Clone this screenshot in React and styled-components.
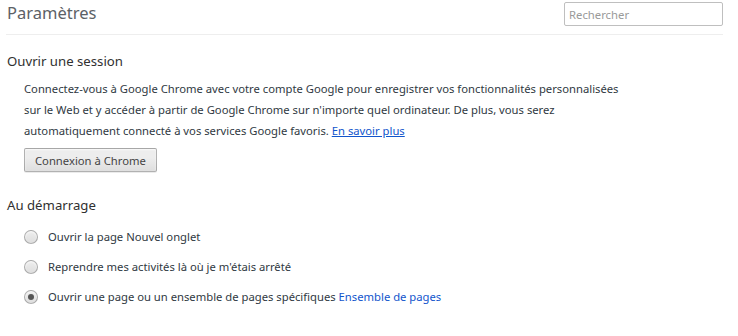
import React from "react";
import styled, { createGlobalStyle } from "styled-components";

const GlobalStyle = createGlobalStyle`
  body {
    margin: 0;
    background: #fff;
    font-family: "Noto Sans", "Open Sans", sans-serif;
    color: #303942;
  }
`;

const Page = styled.div`
  width: 738px;
  height: 336px;
  overflow: hidden;
  padding: 0 15px 0 6px;
  box-sizing: border-box;
`;

const Header = styled.header`
  display: flex;
  align-items: center;
  justify-content: space-between;
  height: 34px;
  border-bottom: 1px solid #eeeeee;
  padding-left: 1px;
`;

const Title = styled.h1`
  margin: 0;
  font-size: 16.5px;
  font-weight: 400;
  color: #5c6166;
  line-height: 1;
  padding-bottom: 8px;
`;

const Search = styled.input`
  width: 159px;
  height: 24px;
  box-sizing: border-box;
  border: 1px solid #bfbfbf;
  border-radius: 2px;
  padding: 0 4px;
  font: inherit;
  font-size: 11.3px;
  margin-bottom: 6px;
  outline: none;

  &::placeholder {
    color: #9a9a9a;
  }
`;

const Section = styled.section`
  padding-left: 1px;
  margin-top: ${(p) => p.$top}px;
`;

const SectionTitle = styled.h3`
  margin: 0;
  font-size: 13.2px;
  font-weight: 400;
  color: #303030;
  line-height: 20px;
`;

const Body = styled.div`
  padding-left: 17px;
  margin-top: ${(p) => p.$top || 0}px;
`;

const Text = styled.p`
  margin: 0;
  font-size: 11.25px;
  line-height: 21px;
  color: #303942;
`;

const Link = styled.a`
  color: #1155cc;
  text-decoration: ${(p) => (p.$plain ? "none" : "underline")};
  cursor: pointer;
`;

const Button = styled.button`
  margin-top: 7px;
  height: 24px;
  padding: 0 10px;
  font: inherit;
  font-size: 11.25px;
  color: #444;
  border: 1px solid rgba(0, 0, 0, 0.25);
  border-radius: 2px;
  background: linear-gradient(#ededed, #ededed 38%, #dedede);
  box-shadow: 0 1px 0 rgba(0, 0, 0, 0.08), inset 0 1px 2px rgba(255, 255, 255, 0.75);
`;

const RadioList = styled.div`
  display: flex;
  flex-direction: column;
  gap: 12px;
  margin-top: 13px;
`;

const RadioRow = styled.label`
  display: flex;
  align-items: center;
  gap: 10px;
  font-size: 11.25px;
  line-height: 18px;
  color: #303942;
`;

const Radio = styled.span`
  width: 12px;
  height: 12px;
  border-radius: 50%;
  border: 1px solid rgba(0, 0, 0, 0.25);
  background: linear-gradient(#ededed, #dedede);
  box-shadow: inset 0 1px 2px rgba(255, 255, 255, 0.75);
  display: flex;
  align-items: center;
  justify-content: center;
  flex-shrink: 0;

  &::after {
    content: "";
    width: 6px;
    height: 6px;
    border-radius: 50%;
    background: ${(p) => (p.$checked ? "#555" : "transparent")};
  }
`;

const startup = [
  { label: "Ouvrir la page Nouvel onglet" },
  { label: "Reprendre mes activités là où je m'étais arrêté" },
  {
    label: "Ouvrir une page ou un ensemble de pages spécifiques",
    checked: true,
    link: "Ensemble de pages",
  },
];

const App = () => (
  <>
    <GlobalStyle />
    <Page>
      <Header>
        <Title>Paramètres</Title>
        <Search placeholder="Rechercher" />
      </Header>

      <Section $top={16}>
        <SectionTitle>Ouvrir une session</SectionTitle>
        <Body $top={7}>
          <Text>
            Connectez-vous à Google Chrome avec votre compte Google pour
            enregistrer vos fonctionnalités personnalisées
            <br />
            sur le Web et y accéder à partir de Google Chrome sur n'importe
            quel ordinateur. De plus, vous serez
            <br />
            automatiquement connecté à vos services Google favoris.{" "}
            <Link>En savoir plus</Link>
          </Text>
          <Button>Connexion à Chrome</Button>
        </Body>
      </Section>

      <Section $top={23}>
        <SectionTitle>Au démarrage</SectionTitle>
        <Body>
          <RadioList>
            {startup.map((item) => (
              <RadioRow key={item.label}>
                <Radio $checked={item.checked} />
                <span>
                  {item.label}
                  {item.link && (
                    <>
                      {" "}
                      <Link $plain>{item.link}</Link>
                    </>
                  )}
                </span>
              </RadioRow>
            ))}
          </RadioList>
        </Body>
      </Section>
    </Page>
  </>
);

export default App;
